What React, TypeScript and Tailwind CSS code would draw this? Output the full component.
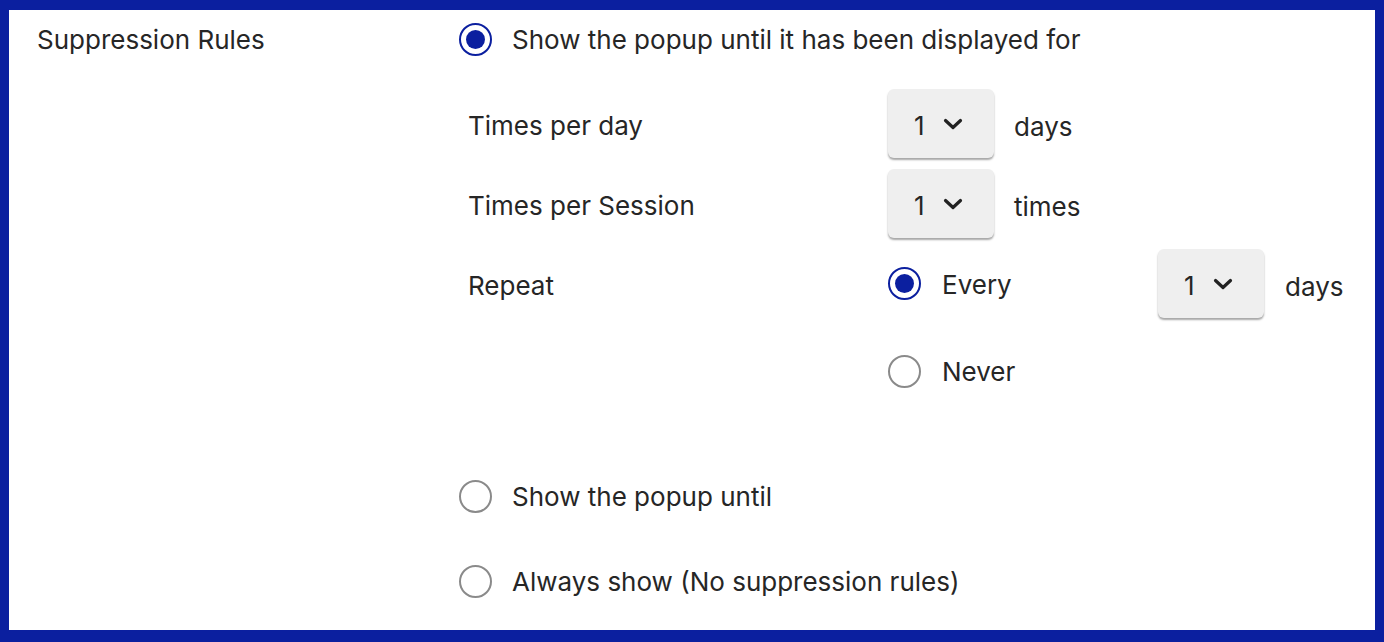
const font = { fontFamily: 'Inter, "Noto Sans", sans-serif' };

function Radio({ checked }: { checked?: boolean }) {
  return (
    <span
      className={`flex h-[33px] w-[33px] shrink-0 items-center justify-center rounded-full border-2 ${checked ? 'border-[#0b1f9f]' : 'border-[#8a8a8a]'}`}
    >
      {checked && <span className="h-[19px] w-[19px] rounded-full bg-[#0b1f9f]" />}
    </span>
  );
}

function Select({ value }: { value: string }) {
  return (
    <div className="flex h-[69px] w-[106px] shrink-0 items-center gap-[18px] rounded-[6px] bg-[#efefef] pl-[26px] shadow-[0_2px_2px_rgba(0,0,0,0.35)]">
      <span className="mt-[3px]">{value}</span>
      <svg width="20" height="12" viewBox="0 0 20 12" className="mt-[1px]">
        <path d="M2.5 2.5 L10 9.5 L17.5 2.5" fill="none" stroke="#222" strokeWidth="3.2" strokeLinecap="round" strokeLinejoin="round" />
      </svg>
    </div>
  );
}

export default function App() {
  return (
    <div
      style={font}
      className="box-border flex h-[642px] w-[1384px] border-t-[10px] border-r-[9px] border-b-[12px] border-l-[9px] border-[#0b1f9f] bg-white pl-[28px] text-[26px] text-[#262626]"
    >
      <div className="flex h-[58px] w-[422px] shrink-0 items-center">Suppression Rules</div>

      <div className="flex flex-col">
        <label className="flex h-[58px] items-center gap-[20px]">
          <Radio checked />
          <span>Show the popup until it has been displayed for</span>
        </label>

        <div className="mt-[21px] flex flex-col gap-[11px] pl-[9px]">
          <div className="flex h-[69px] items-center">
            <span className="mt-[4px] w-[420px] shrink-0">Times per day</span>
            <Select value="1" />
            <span className="ml-[20px] mt-[6px]">days</span>
          </div>
          <div className="flex h-[69px] items-center">
            <span className="mt-[4px] w-[420px] shrink-0">Times per Session</span>
            <Select value="1" />
            <span className="ml-[20px] mt-[6px]">times</span>
          </div>
          <div className="flex h-[69px] items-center">
            <span className="mt-[4px] w-[420px] shrink-0">Repeat</span>
            <label className="flex w-[270px] shrink-0 items-center gap-[21px]">
              <Radio checked />
              <span className="mt-[2px]">Every</span>
            </label>
            <Select value="1" />
            <span className="ml-[21px] mt-[6px]">days</span>
          </div>
        </div>

        <label className="ml-[429px] mt-[36px] flex h-[34px] items-center gap-[21px]">
          <Radio />
          <span>Never</span>
        </label>

        <label className="mt-[91px] flex h-[34px] items-center gap-[20px]">
          <Radio />
          <span>Show the popup until</span>
        </label>

        <label className="mt-[51px] flex h-[34px] items-center gap-[20px]">
          <Radio />
          <span>Always show (No suppression rules)</span>
        </label>
      </div>
    </div>
  );
}
